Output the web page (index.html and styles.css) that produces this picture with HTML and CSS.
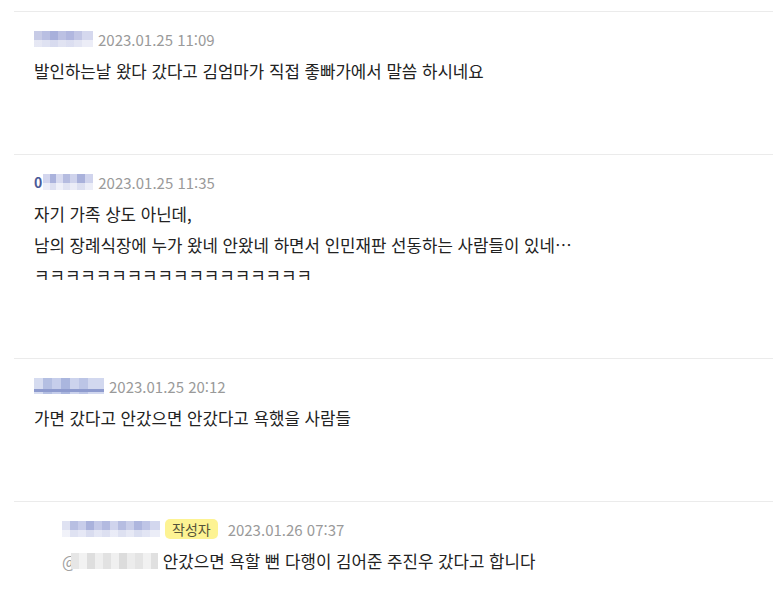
FILE: index.html
```html
<!DOCTYPE html>
<html lang="ko">
<head>
    <meta charset="UTF-8">
    <meta name="viewport" content="width=device-width, initial-scale=1.0">
    <title>댓글</title>
    <link rel="stylesheet" href="styles.css">
</head>
<body>
<ul class="comment-list">
    <li class="comment">
        <div class="comment-head">
            <span class="nick mosaic nick-1"></span>
            <span class="date">2023.01.25 11:09</span>
        </div>
        <p class="comment-text">발인하는날 왔다 갔다고 김엄마가 직접 좋빠가에서 말씀 하시네요</p>
    </li>
    <li class="comment">
        <div class="comment-head">
            <span class="nick"><span class="nick-char">0</span><span class="mosaic nick-2"></span></span>
            <span class="date">2023.01.25 11:35</span>
        </div>
        <p class="comment-text">자기 가족 상도 아닌데,<br>남의 장례식장에 누가 왔네 안왔네 하면서 인민재판 선동하는 사람들이 있네…<br>ㅋㅋㅋㅋㅋㅋㅋㅋㅋㅋㅋㅋㅋㅋㅋㅋㅋㅋ</p>
    </li>
    <li class="comment">
        <div class="comment-head">
            <span class="nick mosaic nick-3"></span>
            <span class="date">2023.01.25 20:12</span>
        </div>
        <p class="comment-text">가면 갔다고 안갔으면 안갔다고 욕했을 사람들</p>
    </li>
    <li class="comment reply">
        <div class="comment-head">
            <span class="nick mosaic nick-4"></span>
            <span class="badge">작성자</span>
            <span class="date">2023.01.26 07:37</span>
        </div>
        <p class="comment-text"><span class="mention">@<span class="mosaic mention-name"></span></span> 안갔으면 욕할 뻔 다행이 김어준 주진우 갔다고 합니다</p>
    </li>
</ul>
</body>
</html>
```

FILE: styles.css
```css
body {
    margin: 0;
    background-color: #ffffff;
    font-family: "Noto Sans CJK KR", "Noto Sans", sans-serif;
    color: #222222;
}

.comment-list {
    list-style: none;
    margin: 11px 0 0;
    padding: 0 0 0 14px;
}

.comment {
    border-top: 1px solid #ebebeb;
    padding: 16px 20px 67.5px;
}

.comment.reply {
    padding-left: 48px;
}

.comment-head {
    display: flex;
    align-items: center;
    height: 22px;
    margin-bottom: 6px;
}

.nick {
    display: flex;
    align-items: center;
    margin-right: 5px;
}

.nick-char {
    font-size: 14px;
    font-weight: bold;
    color: #4b5a98;
    margin-right: 1px;
}

.date {
    font-size: 15px;
    color: #9a9a9a;
}

.comment-text {
    margin: 0;
    font-size: 16.8px;
    line-height: 30.5px;
    color: #222222;
}

.badge {
    background-color: #fdf393;
    color: #55533a;
    font-size: 14px;
    line-height: 20px;
    padding: 0 7px;
    border-radius: 5px;
    margin-right: 10px;
}

/* blurred nicknames */
.mosaic {
    display: inline-block;
    height: 16px;
}

.nick-1 {
    width: 59px;
    background-image:
        linear-gradient(to bottom, rgba(255,255,255,0) 55%, rgba(255,255,255,0.55) 55%),
        linear-gradient(90deg, #c7cbe6 0 8px, #b9bfe2 8px 16px, #a8b0db 16px 24px, #bcc1e3 24px 32px, #b1b7df 32px 40px, #c2c6e5 40px 48px, #d5d8ee 48px 59px);
}

.nick-2 {
    width: 50px;
    background-image:
        linear-gradient(to bottom, rgba(255,255,255,0) 55%, rgba(255,255,255,0.6) 55%),
        linear-gradient(90deg, #d3d6ee 0 7px, #aab2dc 7px 13px, #d8dbf0 13px 20px, #b5bce0 20px 27px, #cfd3ec 27px 34px, #a9b1db 34px 42px, #d0d4ed 42px 50px);
}

.nick-3 {
    width: 70px;
    background-image:
        linear-gradient(to bottom, rgba(255,255,255,0) 70%, #8e9bce 70% 85%, rgba(255,255,255,0) 85%),
        linear-gradient(90deg, #d6dcf0 0 9px, #b4bfe2 9px 18px, #c6ceeb 18px 27px, #aab6de 27px 36px, #ccd3ed 36px 45px, #bcc5e6 45px 54px, #d2d8ef 54px 70px);
}

.nick-4 {
    width: 98px;
    background-image:
        linear-gradient(to bottom, rgba(255,255,255,0) 55%, rgba(255,255,255,0.55) 55%),
        linear-gradient(90deg, #dfe2f2 0 8px, #b8bfe2 8px 16px, #c8cdea 16px 24px, #aab2dc 24px 32px, #c4c9e8 32px 40px, #b3bae0 40px 48px, #d0d4ed 48px 56px, #b6bde1 56px 64px, #c9cee9 64px 72px, #aeb6de 72px 80px, #bfc5e6 80px 88px, #d3d7ee 88px 98px);
}

.mention {
    display: inline-flex;
    align-items: center;
    color: #a0a0a0;
    font-size: 16px;
    vertical-align: top;
    height: 30px;
}

.mention-name {
    width: 87px;
    margin-left: -6px;
    background-image:
        linear-gradient(90deg, #e6e6e6 0 8px, #f2f2f2 8px 16px, #dedede 16px 24px, #efefef 24px 32px, #e2e2e2 32px 40px, #f0f0f0 40px 48px, #dcdcdc 48px 56px, #ececec 56px 64px, #e4e4e4 64px 72px, #f1f1f1 72px 80px, #e0e0e0 80px 87px);
}
```
